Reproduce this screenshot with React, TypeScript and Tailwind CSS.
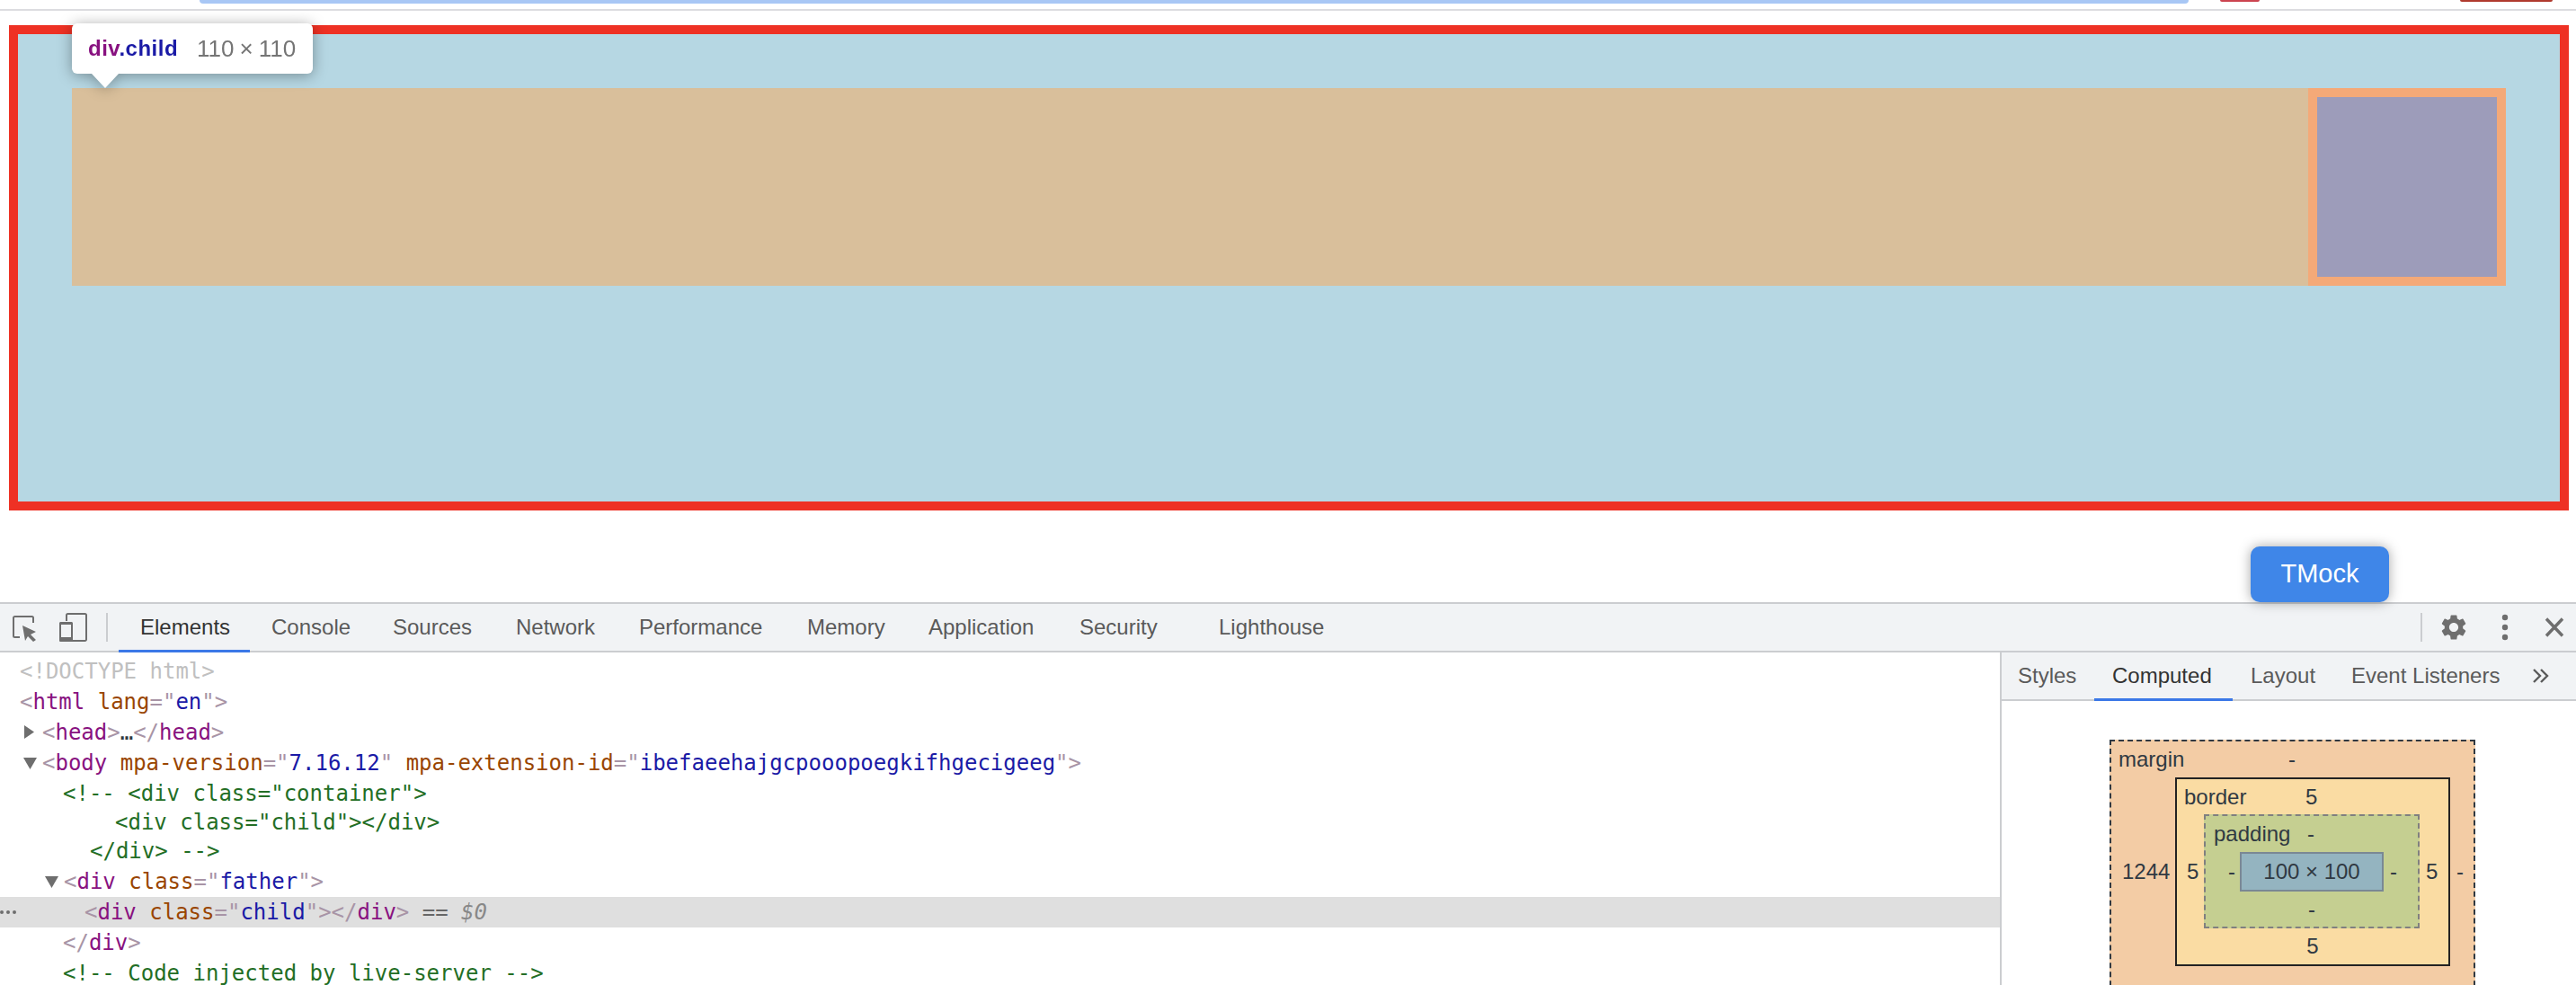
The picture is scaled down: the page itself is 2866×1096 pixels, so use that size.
import { MdSettings } from "react-icons/md";

const sans = "font-['Liberation_Sans',Arial,sans-serif]";

function Br({ children }: { children: React.ReactNode }) {
  return <span className="text-[#a894a6]">{children}</span>;
}
function Tag({ children }: { children: React.ReactNode }) {
  return <span className="text-[#881280]">{children}</span>;
}
function Name({ children }: { children: React.ReactNode }) {
  return <span className="text-[#994500]">{children}</span>;
}
function Val({ children }: { children: React.ReactNode }) {
  return <span className="text-[#1a1aa6]">{children}</span>;
}
function Attr({ name, value }: { name: string; value: string }) {
  return (
    <>
      <Name>{name}</Name>
      <Br>="</Br>
      <Val>{value}</Val>
      <Br>"</Br>
    </>
  );
}

function ArrowRight() {
  return (
    <svg width="25" height="34" viewBox="0 0 25 34" className="shrink-0">
      <polygon points="5,9 5,24 16,16.5" fill="#6e6e6e" />
    </svg>
  );
}
function ArrowDown() {
  return (
    <svg width="25" height="34" viewBox="0 0 25 34" className="shrink-0">
      <polygon points="4,11 19,11 11.5,24" fill="#6e6e6e" />
    </svg>
  );
}

function Tab({ label, active, className }: { label: string; active?: boolean; className: string }) {
  return (
    <div
      className={`flex items-center pl-[24px] -mb-[2px] border-b-[3px] ${
        active ? "border-[#3b78e7] text-[#333333]" : "border-transparent text-[#5a5a5a]"
      } ${className}`}
    >
      {label}
    </div>
  );
}

function SideTab({ label, active, className }: { label: string; active?: boolean; className: string }) {
  return (
    <div
      className={`flex items-center -mb-[2px] border-b-[3px] ${
        active ? "border-[#3b78e7] text-[#333333]" : "border-transparent text-[#5a5a5a]"
      } ${className}`}
    >
      {label}
    </div>
  );
}

function ElementsTree() {
  return (
    <div className="flex-1 min-w-0 pt-[4px] font-['DejaVu_Sans_Mono',monospace] text-[24px] leading-[34px] whitespace-pre bg-white">
      <div className="h-[34px] pl-[22px] text-[#c0c0c0]">{"<!DOCTYPE html>"}</div>
      <div className="h-[34px] pl-[22px]">
        <Br>{"<"}</Br>
        <Tag>html</Tag> <Attr name="lang" value="en" />
        <Br>{">"}</Br>
      </div>
      <div className="h-[34px] pl-[22px] flex">
        <ArrowRight />
        <span>
          <Br>{"<"}</Br>
          <Tag>head</Tag>
          <Br>{">"}</Br>
          <span className="text-[#303942]">…</span>
          <Br>{"</"}</Br>
          <Tag>head</Tag>
          <Br>{">"}</Br>
        </span>
      </div>
      <div className="h-[34px] pl-[22px] flex">
        <ArrowDown />
        <span>
          <Br>{"<"}</Br>
          <Tag>body</Tag> <Attr name="mpa-version" value="7.16.12" />{" "}
          <Attr name="mpa-extension-id" value="ibefaeehajgcpooopoegkifhgecigeeg" />
          <Br>{">"}</Br>
        </span>
      </div>
      {/* multi-line comment sits a little tighter than the other rows */}
      <div className="h-[32px] pl-[70px] text-[#236e25]">{'<!-- <div class="container">'}</div>
      <div className="h-[32px] pl-[128px] text-[#236e25]">{'<div class="child"></div>'}</div>
      <div className="h-[34px] pl-[100px] text-[#236e25]">{"</div> -->"}</div>
      <div className="h-[34px] pl-[46px] flex">
        <ArrowDown />
        <span>
          <Br>{"<"}</Br>
          <Tag>div</Tag> <Attr name="class" value="father" />
          <Br>{">"}</Br>
        </span>
      </div>
      <div className="h-[34px] flex bg-[#dfdfdf]">
        <div className="w-[94px] shrink-0 flex items-center gap-[3px]">
          <span className="size-[4px] rounded-full bg-[#6e6e6e]" />
          <span className="size-[4px] rounded-full bg-[#6e6e6e]" />
          <span className="size-[4px] rounded-full bg-[#6e6e6e]" />
        </div>
        <span>
          <Br>{"<"}</Br>
          <Tag>div</Tag> <Attr name="class" value="child" />
          <Br>{">"}</Br>
          <Br>{"</"}</Br>
          <Tag>div</Tag>
          <Br>{">"}</Br> <span className="text-[#666666]">==</span>{" "}
          <span className="italic text-[#888888]">$0</span>
        </span>
      </div>
      <div className="h-[34px] pl-[70px]">
        <Br>{"</"}</Br>
        <Tag>div</Tag>
        <Br>{">"}</Br>
      </div>
      <div className="h-[34px] pl-[70px] text-[#236e25]">{"<!-- Code injected by live-server -->"}</div>
    </div>
  );
}

function BoxModel() {
  return (
    <div className="pt-[43px] pl-[120px] text-[24px] leading-none text-[#303942] overflow-hidden">
      {/* margin */}
      <div className="w-[407px] h-[294px] border-2 border-dashed border-[#303942] bg-[#f3cca5]">
        <div className="flex items-center h-[40px] pl-[8px]">
          <span className="w-[189px]">margin</span>
          <span>-</span>
        </div>
        <div className="flex items-center">
          <span className="w-[71px] pl-[12px]">1244</span>
          {/* border */}
          <div className="w-[306px] h-[210px] border-2 border-[#222222] bg-[#fadca3] flex flex-col">
            <div className="flex items-center h-[39px] pl-[8px]">
              <span className="w-[135px]">border</span>
              <span>5</span>
            </div>
            <div className="flex items-center">
              <span className="w-[30px] pl-[11px]">5</span>
              {/* padding */}
              <div className="w-[240px] h-[127px] border-2 border-dashed border-[#808080] bg-[#c5cf91] flex flex-col">
                <div className="flex items-center h-[40px] pl-[9px]">
                  <span className="w-[104px]">padding</span>
                  <span>-</span>
                </div>
                <div className="flex items-center">
                  <span className="w-[38px] pl-[25px]">-</span>
                  <div className="w-[160px] h-[44px] border-2 border-[#7a8894] bg-[#94b4c0] flex items-center justify-center">
                    100 × 100
                  </div>
                  <span className="pl-[7px]">-</span>
                </div>
                <div className="flex-1 flex items-center justify-center">-</div>
              </div>
              <span className="pl-[7px]">5</span>
            </div>
            <div className="flex-1 flex items-center justify-center">5</div>
          </div>
          <span className="pl-[7px]">-</span>
        </div>
        <div className="flex items-start justify-center h-[40px] pt-[14px]">-</div>
      </div>
    </div>
  );
}

export default function App() {
  return (
    <div className={`relative w-[2866px] h-[1096px] overflow-hidden bg-white flex flex-col ${sans}`}>
      {/* browser chrome left over at the top */}
      <div className="h-[10px] flex items-start shrink-0">
        <div className="ml-[222px] w-[2213px] h-[4px] bg-[#a8c7f5] rounded-b-[12px]" />
        <div className="ml-[35px] w-[44px] h-[2px] bg-[#cc4450] rounded-b-[4px]" />
        <div className="ml-[223px] w-[103px] h-[2px] bg-[#b03a2e] rounded-b-[4px]" />
      </div>
      <div className="h-[2px] bg-[#dcdce0] shrink-0" />

      {/* page */}
      <div className="h-[658px] shrink-0 pt-[16px] pl-[10px]">
        <div className="w-[2848px] h-[540px] border-[10px] border-[#ee3124] bg-[#b6d7e3] pt-[60px] pl-[60px]">
          <div className="w-[2708px] h-[220px] bg-[#d9bf9b] flex justify-end">
            <div className="size-[220px] border-[10px] border-[#f4a978] bg-[#9d9cba]" />
          </div>
        </div>
      </div>

      {/* highlight tooltip */}
      <div className="absolute left-[80px] top-[26px] drop-shadow-[0_2px_8px_rgba(0,0,0,0.35)]">
        <div className="w-[268px] h-[56px] bg-white rounded-[6px] flex items-center pl-[18px] text-[24px]">
          <span className="font-bold tracking-[0.5px] mr-[21px]">
            <span className="text-[#881280]">div</span>
            <span className="text-[#1a1aa6]">.child</span>
          </span>
          <span className="text-[#757575] text-[26px] flex items-center">
            110<span className="mx-[6px]">×</span>110
          </span>
        </div>
        <div className="ml-[22px] w-[30px] h-[16px] bg-white [clip-path:polygon(0_0,100%_0,50%_100%)]" />
      </div>

      {/* floating button */}
      <div className="absolute left-[2504px] top-[608px] z-10 w-[154px] h-[62px] rounded-[10px] bg-[#3f86e8] text-white text-[29px] flex items-center justify-center shadow-[0_0_14px_rgba(0,0,0,0.35)]">
        TMock
      </div>

      {/* devtools */}
      <div className="flex-1 min-h-0 flex flex-col text-[24px]">
        <div className="h-[56px] shrink-0 border-y-2 border-[#cbcdd0] bg-[#f1f3f5] flex items-stretch">
          <div className="w-[132px] shrink-0 flex items-center pl-[14px]">
            <svg width="28" height="32" viewBox="0 0 28 32" fill="none" className="shrink-0">
              <path
                d="M8 27H2.5A1.5 1.5 0 0 1 1 25.5V5.5A1.5 1.5 0 0 1 2.5 4H21.5A1.5 1.5 0 0 1 23 5.5V11"
                stroke="#6e6e6e"
                strokeWidth="2"
              />
              <polygon points="11,14 26,21 20,24 26,30 23,32 17,26 14,31" fill="#6e6e6e" />
            </svg>
            <svg width="32" height="32" viewBox="0 0 32 32" fill="none" className="ml-[24px] shrink-0">
              <path
                d="M8 9V2.5A1.5 1.5 0 0 1 9.5 1H28.5A1.5 1.5 0 0 1 30 2.5V29.5A1.5 1.5 0 0 1 28.5 31H14"
                stroke="#6e6e6e"
                strokeWidth="2"
              />
              <rect x="1" y="11" width="13" height="20" rx="1.5" stroke="#6e6e6e" strokeWidth="2" />
              <rect x="0" y="27" width="15" height="5" rx="1.5" fill="#6e6e6e" />
              <rect x="0" y="10" width="15" height="3" rx="1.5" fill="#6e6e6e" />
            </svg>
            <div className="ml-[20px] w-[2px] h-[32px] bg-[#cbcdd0]" />
          </div>
          <Tab label="Elements" active className="w-[146px]" />
          <Tab label="Console" className="w-[135px]" />
          <Tab label="Sources" className="w-[137px]" />
          <Tab label="Network" className="w-[137px]" />
          <Tab label="Performance" className="w-[187px]" />
          <Tab label="Memory" className="w-[135px]" />
          <Tab label="Application" className="w-[168px]" />
          <Tab label="Security" className="w-[155px]" />
          <Tab label="Lighthouse" className="w-[165px]" />
          <div className="ml-auto flex items-center pr-[7px]">
            <div className="w-[2px] h-[32px] bg-[#cbcdd0]" />
            <MdSettings size={34} color="#6e6e6e" className="ml-[18px]" />
            <svg width="8" height="32" viewBox="0 0 8 32" fill="#6e6e6e" className="ml-[36px]">
              <circle cx="4" cy="5" r="3.2" />
              <circle cx="4" cy="16" r="3.2" />
              <circle cx="4" cy="27" r="3.2" />
            </svg>
            <svg width="34" height="34" viewBox="0 0 34 34" fill="none" className="ml-[34px]">
              <path d="M8 7.5L26 26.5M26 7.5L8 26.5" stroke="#6e6e6e" strokeWidth="3.4" />
            </svg>
          </div>
        </div>

        <div className="flex-1 min-h-0 flex">
          <ElementsTree />
          <div className="w-[641px] shrink-0 border-l-2 border-[#cbcdd0] flex flex-col">
            <div className="h-[54px] shrink-0 border-b-2 border-[#cbcdd0] bg-[#f1f3f5] flex items-stretch">
              <SideTab label="Styles" className="w-[103px] pl-[18px]" />
              <SideTab label="Computed" active className="w-[154px] pl-[20px]" />
              <SideTab label="Layout" className="w-[112px] pl-[20px]" />
              <SideTab label="Event Listeners" className="w-[203px] pl-[20px]" />
              <svg width="18" height="16" viewBox="0 0 18 16" fill="none" className="self-center ml-[19px]">
                <polyline points="1,1 8,8 1,15" stroke="#5a5a5a" strokeWidth="2.4" />
                <polyline points="9,1 16,8 9,15" stroke="#5a5a5a" strokeWidth="2.4" />
              </svg>
            </div>
            <BoxModel />
          </div>
        </div>
      </div>
    </div>
  );
}
